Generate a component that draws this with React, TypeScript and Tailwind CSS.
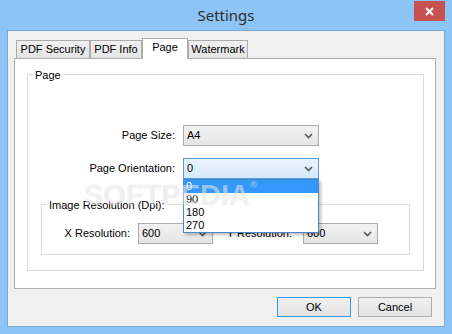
import React from "react";

const sans = { fontFamily: '"Liberation Sans", Arial, sans-serif' };

function Chevron() {
  return (
    <svg width="9" height="6" viewBox="0 0 9 6" className="shrink-0">
      <path d="M1 1 L4.5 4.5 L8 1" fill="none" stroke="#5a5a5a" strokeWidth="1.6" />
    </svg>
  );
}

function Combo({ value, active, width }: { value: string; active?: boolean; width: string }) {
  return (
    <div
      className={`flex items-center justify-between h-[21px] border pl-[3px] pr-[5px] ${width} ${
        active
          ? "border-[#569de5] bg-linear-to-b from-[#eaf3fc] to-[#d7e9fb]"
          : "border-[#acacac] bg-linear-to-b from-[#f2f2f2] to-[#e5e5e5]"
      }`}
    >
      <span className="leading-[13px]">{value}</span>
      <Chevron />
    </div>
  );
}

function Tab({ label, selected, width }: { label: string; selected?: boolean; width: string }) {
  return selected ? (
    <div
      className={`relative z-10 -mb-[1px] h-[21px] ${width} border border-b-0 border-[#acacac] bg-white flex items-center justify-center pb-[3px]`}
    >
      {label}
    </div>
  ) : (
    <div
      className={`h-[18px] ${width} border border-b-0 border-[#acacac] bg-linear-to-b from-[#f0f0f0] to-[#e5e5e5] flex items-center justify-center`}
    >
      {label}
    </div>
  );
}

export default function App() {
  return (
    <div
      className="relative w-[452px] h-[334px] bg-[#8cc4f5] flex flex-col text-[11px] text-black overflow-hidden"
      style={sans}
    >
      {/* Title bar */}
      <div className="relative h-[30px] flex items-center justify-center shrink-0">
        <span
          className="text-[15px] text-[#2e2e2e] leading-none"
          style={{ fontFamily: '"Segoe UI", "Noto Sans", sans-serif' }}
        >
          Settings
        </span>
        <div className="absolute top-[1px] right-[7px] w-[31px] h-[20px] bg-[#c75050] flex items-center justify-center">
          <svg width="9" height="9" viewBox="0 0 9 9">
            <path d="M1 1 L8 8 M8 1 L1 8" stroke="#ffffff" strokeWidth="2" />
          </svg>
        </div>
      </div>

      {/* Client area */}
      <div className="mx-[7px] h-[297px] border border-[#78acdc] bg-[#f0f0f0] pt-[7px] pl-[6px] pr-[8px] flex flex-col">
        {/* Tabs */}
        <div className="h-[20px] flex items-end pl-[2px]">
          <Tab label="PDF Security" width="w-[74px]" />
          <Tab label="PDF Info" width="w-[52px]" />
          <Tab label="Page" width="w-[46px]" selected />
          <Tab label="Watermark" width="w-[60px]" />
        </div>

        {/* Tab panel */}
        <div className="h-[231px] border border-[#acacac] bg-white pt-[15px] pl-[12px] pr-[11px] pb-[17px] flex flex-col">
          <div className="relative flex-1 border border-[#dcdcdc] flex flex-col">
            <span className="absolute left-[5px] -top-[6px] bg-white px-[2px] leading-[13px]">Page</span>

            <div className="mt-[50px] flex items-center">
              <span className="w-[147px] text-right leading-[13px]">Page Size:</span>
              <div className="ml-[8px]">
                <Combo value="A4" width="w-[136px]" />
              </div>
            </div>

            <div className="mt-[12px] flex items-center">
              <span className="w-[147px] text-right leading-[13px]">Page Orientation:</span>
              <div className="ml-[8px]">
                <Combo value="0" width="w-[136px]" active />
              </div>
            </div>

            <div className="relative mt-[25px] mx-[13px] h-[51px] border border-[#dcdcdc] flex flex-col">
              <span className="absolute left-[5px] -top-[6px] bg-white px-[2px] leading-[13px]">
                Image Resolution (Dpi):
              </span>
              <div className="mt-[18px] flex items-center">
                <span className="w-[88px] text-right leading-[13px]">X Resolution:</span>
                <div className="ml-[8px]">
                  <Combo value="600" width="w-[75px]" />
                </div>
                <span className="w-[79px] text-right leading-[13px]">Y Resolution:</span>
                <div className="ml-[11px]">
                  <Combo value="600" width="w-[75px]" />
                </div>
              </div>
            </div>
          </div>
        </div>

        {/* Buttons */}
        <div className="mt-[8px] -mr-[2px] flex justify-end gap-[7px] pr-[6px]">
          <div className="w-[74px] h-[20px] border border-[#3399ff] bg-linear-to-b from-[#f0f0f0] to-[#e3e3e3] flex items-center justify-center">
            OK
          </div>
          <div className="w-[74px] h-[20px] border border-[#acacac] bg-linear-to-b from-[#f0f0f0] to-[#e3e3e3] flex items-center justify-center">
            Cancel
          </div>
        </div>
      </div>

      {/* Open dropdown list */}
      <div className="absolute left-[183px] top-[179px] w-[136px] border border-[#4a88cc] bg-white shadow-[2px_2px_3px_rgba(0,0,0,0.25)] flex flex-col">
        <div className="h-[13px] leading-[13px] pl-[2px] bg-[#3399ff] text-white">0</div>
        <div className="h-[13px] leading-[13px] pl-[2px]">90</div>
        <div className="h-[13px] leading-[13px] pl-[2px]">180</div>
        <div className="h-[13px] leading-[13px] pl-[2px]">270</div>
      </div>

      {/* Watermark */}
      <div
        className="pointer-events-none absolute left-[84px] top-[181px] text-[29px] font-bold leading-none text-white/50 [text-shadow:0_0_1px_rgba(0,0,0,0.12)]"
        style={sans}
      >
        SOFTPEDIA<span className="text-[9px] align-top">®</span>
      </div>
    </div>
  );
}
